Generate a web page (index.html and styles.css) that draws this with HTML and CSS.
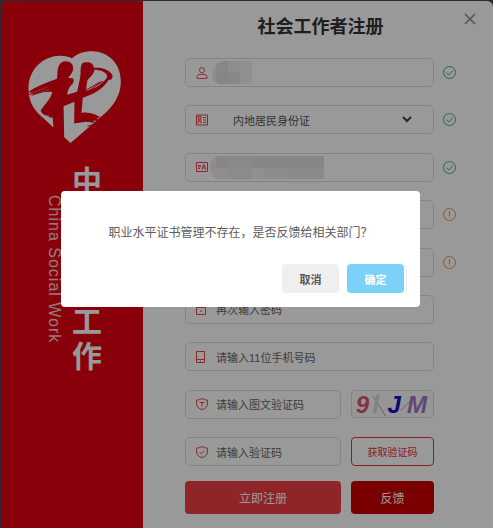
FILE: index.html
```
<!DOCTYPE html>
<html lang="zh-CN">
<head>
    <meta charset="UTF-8">
    <meta name="viewport" content="width=device-width, initial-scale=1.0">
    <title>社会工作者注册</title>
    <link rel="stylesheet" href="styles.css">
</head>
<body>

<div class="panel">
    <div class="side">
        <svg class="logo" viewBox="80 148 286 284">
            <path class="heart" d="M211 429 L120 346 C96 324 84 298 84 265 C84 206 128 165 180 165 C196 165 206 168 215 173 C231 160 252 152 275 152 C326 152 363 190 363 243 C363 282 344 311 318 337 Z"/>
            <path d="M196 182 C211 182 219 191 219 202 C219 216 210 225 204 232 L219 234 C223 243 219 250 212 255 C205 263 202 272 201 283 L231 274 L240 232 C243 219 239 209 244 194 C246 186 251 185 261 185 C272 184 280 191 282 202 C303 199 329 207 338 224 C339 234 332 240 326 238 C315 259 287 281 248 292 L244 338 C260 335 277 340 287 344 L301 351 L290 355 L299 361 L280 362 L284 368 L258 365 L222 370 L223 304 L190 318 L192 419 L160 390 L157 352 L144 351 L147 346 C135 349 122 339 121 330 C134 311 151 297 156 275 L143 274 C125 276 111 279 91 288 L100 280 L83 285 L94 276 L80 277 C105 260 137 246 170 235 C173 222 169 205 178 192 C183 184 188 182 196 182 Z"/>
            <path class="heart" d="M284 207 C280 225 268 231 262 240 L257 271 C285 266 310 249 321 231 C326 220 307 209 284 207 Z"/>
            <path class="brush" d="M91 279 L141 260 M98 288 L145 266"/>
            <path class="stroke" d="M256 270 L302 244 M262 274 L309 242"/>
            <path class="stroke" d="M262 378 L280 374"/>
        </svg>
        <div class="names">
            <div class="name-en">China Social Work</div>
            <div class="name-cn">中国社会工作</div>
        </div>
    </div>

    <form class="main">
        <button type="button" class="close" aria-label="关闭">
            <svg viewBox="0 0 12 12"><path d="M1 1 L11 11 M11 1 L1 11"/></svg>
        </button>
        <h1>社会工作者注册</h1>

        <div class="rows">
            <div class="row">
                <div class="field">
                    <svg class="icon" viewBox="0 0 12 13"><circle cx="6" cy="3.5" r="2.8"/><path d="M.6 12.4 V11 C.6 9 2 8 4 8 H8 C10 8 11.4 9 11.4 11 V12.4 Z"/></svg>
                    <input type="text" aria-label="姓名">
                    <svg class="mosaic name" viewBox="0 0 40 23">
                        <path fill="#f7e9e9" d="M5 5 Q0 7 0 14 Q1 21 5 22 Z"/>
                        <path fill="#e2e2e2" d="M4 4 Q7 0 12 0 H16 V11 H4 Z"/>
                        <path fill="#ececec" d="M16 0 H28 V11 H16 Z"/>
                        <path fill="#f1f1f1" d="M28 0 H40 V23 H28 Z"/>
                        <path fill="#dedede" d="M4 11 H16 V23 H8 Q4 23 4 19 Z"/>
                        <path fill="#e3e3e3" d="M16 11 H28 V23 H16 Z"/>
                    </svg>
                </div>
                <svg class="status ok" viewBox="0 0 13 13"><circle cx="6.5" cy="6.5" r="6"/><path d="M3.3 6.7 L5.8 9 L10 4.4"/></svg>
            </div>

            <div class="row">
                <div class="field">
                    <svg class="icon" viewBox="0 0 12 12"><path d="M.5 1 H11.5 V11 H.5 Z M2 2.5 H5 V5 H2 Z M2 9.5 V7 H5 V9.5 M2 6 H5 M7 3.5 H10 M7 6 H10 M7 8.5 H10"/></svg>
                    <select aria-label="证件类型"><option>内地居民身份证</option></select>
                    <svg class="arrow" viewBox="0 0 10 7"><path d="M1 1 L5 5 L9 1"/></svg>
                </div>
                <svg class="status ok" viewBox="0 0 13 13"><circle cx="6.5" cy="6.5" r="6"/><path d="M3.3 6.7 L5.8 9 L10 4.4"/></svg>
            </div>

            <div class="row">
                <div class="field">
                    <svg class="icon" viewBox="0 0 12 12"><path d="M.5 1.5 H11.5 V10.5 H.5 Z M2 4.5 H5 M2 6 H4.6 M2 7.5 H4 M5.8 8.5 L7.8 3.5 L9.8 8.5 M6.5 7 H9"/></svg>
                    <input type="text" aria-label="证件号码">
                    <svg class="mosaic number" viewBox="0 0 114 23">
                        <path fill="#f7e6e6" d="M7 0 Q0 3 0 11 Q0 20 7 23 Z"/>
                        <path fill="#e0e0e0" d="M6 0 H18 V12 H6 Z"/>
                        <path fill="#e4e4e4" d="M18 0 H42 V12 H18 Z"/>
                        <path fill="#e0e0e0" d="M42 0 H114 V12 H42 Z"/>
                        <path fill="#ececec" d="M6 12 H18 V23 H6 Z"/>
                        <path fill="#e8e8e8" d="M18 12 H42 V23 H18 Z"/>
                        <path fill="#f0f0f0" d="M42 12 H54 V23 H42 Z"/>
                        <path fill="#eaeaea" d="M54 12 H78 V23 H54 Z"/>
                        <path fill="#e6e6e6" d="M78 12 H114 V23 H78 Z"/>
                    </svg>
                </div>
                <svg class="status ok" viewBox="0 0 13 13"><circle cx="6.5" cy="6.5" r="6"/><path d="M3.3 6.7 L5.8 9 L10 4.4"/></svg>
            </div>

            <div class="row">
                <div class="field"><input type="text" aria-label="证书编号"></div>
                <svg class="status warn" viewBox="0 0 13 13"><circle cx="6.5" cy="6.5" r="6"/><path d="M6.5 3 V8 M6.5 9 V10"/></svg>
            </div>

            <div class="row">
                <div class="field"><input type="password" aria-label="密码"></div>
                <svg class="status warn" viewBox="0 0 13 13"><circle cx="6.5" cy="6.5" r="6"/><path d="M6.5 3 V8 M6.5 9 V10"/></svg>
            </div>

            <div class="row">
                <div class="field">
                    <svg class="icon" viewBox="0 0 12 12"><path d="M.5 4.5 H9.5 V11.5 H.5 Z M2.5 4.5 V1 H7.5 V4.5 M5 7 V9"/></svg>
                    <input type="password" placeholder="再次输入密码" aria-label="再次输入密码">
                </div>
            </div>

            <div class="row">
                <div class="field">
                    <svg class="icon" viewBox="0 0 12 12"><path d="M.5 .5 H8.5 V11.5 H.5 Z M.5 8.5 H8.5 M4 10 H5"/></svg>
                    <input type="tel" placeholder="请输入11位手机号码" aria-label="手机号码">
                </div>
            </div>

            <div class="row">
                <div class="field">
                    <svg class="icon" viewBox="0 0 12 12"><path d="M6 .5 C7.5 1.6 9.5 2 11.4 2 V6 C11.4 9 9 10.6 6 11.6 C3 10.6 .6 9 .6 6 V2 C2.5 2 4.5 1.6 6 .5 Z M3.5 4.5 H8.5 M6 4.5 V8.5"/></svg>
                    <input type="text" placeholder="请输入图文验证码" aria-label="图文验证码">
                </div>
                <svg class="captcha" viewBox="0 0 83 28" role="img" aria-label="验证码图片">
                    <path class="noise" d="M21 6 L34 27 M50 21 L66 6"/>
                    <text x="2" y="24" fill="#e0566c">9</text>
                    <text x="20" y="24" fill="#dcd8c8">l</text>
                    <text x="36" y="24" fill="#1010c8">J</text>
                    <text x="57" y="24" fill="#a276c8">M</text>
                </svg>
            </div>

            <div class="row">
                <div class="field">
                    <svg class="icon" viewBox="0 0 12 12"><path d="M6 .5 C7.5 1.6 9.5 2 11.4 2 V6 C11.4 9 9 10.6 6 11.6 C3 10.6 .6 9 .6 6 V2 C2.5 2 4.5 1.6 6 .5 Z M3.6 6 L5.4 7.8 L8.6 4.6"/></svg>
                    <input type="text" placeholder="请输入验证码" aria-label="验证码">
                </div>
                <button type="button" class="get-code">获取验证码</button>
            </div>
        </div>

        <div class="actions">
            <button type="submit" class="register">立即注册</button>
            <button type="button" class="feedback">反馈</button>
        </div>
    </form>
</div>

<div class="mask">
    <div class="dialog" role="dialog" aria-modal="true">
        <p>职业水平证书管理不存在，是否反馈给相关部门？</p>
        <div class="dialog-buttons">
            <button type="button" class="cancel">取消</button>
            <button type="button" class="confirm">确定</button>
        </div>
    </div>
</div>

</body>
</html>
```
FILE: styles.css
```
* { box-sizing: border-box; }
body { margin: 0; background: #454b54; font-family: "Liberation Sans", "Noto Sans CJK SC", sans-serif; font-size: 11px; color: #333; }
button, input, select { font-family: inherit; font-size: inherit; color: inherit; margin: 0; }
button { padding: 0; border: 0; border-radius: 4px; cursor: pointer; }
svg { display: block; flex: none; fill: none; }

.panel { display: flex; min-height: 100vh; padding: 1px 0 0 1px; }

/* left banner */
.side { flex: none; width: 142px; padding-top: 49px; background: #e60011; border-radius: 6px 0 0 0; }
.logo { width: 95px; height: 94px; margin-left: 26px; fill: #e60011; }
.logo .heart { fill: #fff; }
.logo .brush { stroke: #fff; stroke-width: 1; }
.logo .stroke { stroke: #e60011; stroke-width: 3; }
.names { display: flex; gap: 9px; margin: 20px 0 0 44px; color: #fff; }
.name-en { writing-mode: vertical-rl; width: 18px; margin-top: 31px; font-size: 16px; line-height: 18px; letter-spacing: 1px; white-space: nowrap; opacity: .8; }
.name-cn { width: 30px; font-size: 30px; line-height: 35px; font-weight: bold; word-break: break-all; }

/* form */
.main { position: relative; flex: 1; min-width: 0; display: flex; flex-direction: column; padding: 13px 37px 14px 42px; background: #fff; border-radius: 0 6px 0 0; }
.main h1 { margin: 0 0 17px; padding-right: 0; text-align: center; font-size: 18px; line-height: 27px; }
.close { position: absolute; top: 12px; right: 17px; width: 12px; height: 12px; background: none; }
.close svg { stroke: #888; stroke-width: 1.5; }
.rows { flex: 1; display: flex; flex-direction: column; justify-content: space-between; }
.row { display: flex; align-items: center; gap: 9px; padding-right: 22px; }
.row:has(.status) { padding-right: 0; }
.row:has(.captcha), .row:has(.get-code) { gap: 10px; }
.field { position: relative; flex: 1; min-width: 0; display: flex; align-items: center; height: 29px; padding-left: 10px; border: 1px solid #dcdcdc; border-radius: 5px; }
.field input { flex: 1; min-width: 0; height: 27px; padding: 2px 0 0 8px; border: 0; background: none; outline: 0; }
.field input::placeholder { color: #666; opacity: 1; }
.field select { flex: 1; min-width: 0; height: 27px; padding: 2px 0 0 25px; border: 0; background: none; color: #555; appearance: none; outline: 0; }
.icon { width: 12px; height: 12px; stroke: #e8444c; }
.arrow { width: 10px; height: 7px; margin-right: 21px; stroke: #444; stroke-width: 2; }
.mosaic { position: absolute; top: 2px; height: 23px; }
.mosaic.name { left: 26px; width: 40px; }
.mosaic.number { left: 24px; width: 114px; }
.status { width: 13px; height: 13px; }
.ok { stroke: #3fae70; }
.warn { stroke: #e89a3c; }
.captcha { width: 83px; height: 28px; border: 1px solid #dcdcdc; border-radius: 4px; background: #fbfbfb; font-size: 26px; font-weight: bold; font-style: italic; }
.captcha .noise { stroke: #a0a8a0; }
.get-code { width: 83px; height: 29px; border: 1px solid #e8343c; background: #fff; color: #e8343c; font-size: 10px; }

.actions { display: flex; gap: 10px; margin-top: 15px; padding-right: 22px; }
.actions button { height: 33px; color: #fff; font-size: 12px; }
.register { flex: 1; background: #ee3e43; }
.actions .feedback { width: 83px; background: #cb0000; }

/* confirm dialog */
.mask { position: fixed; inset: 0; padding: 191px 73px 0 61px; background: rgba(0,0,0,0.4); }
.dialog { padding: 32px 16px 14px; background: #fff; border-radius: 4px; }
.dialog p { margin: 0 0 20px; text-align: center; font-size: 12px; line-height: 21px; color: #5c5c5c; }
.dialog-buttons { display: flex; justify-content: flex-end; gap: 8px; }
.dialog-buttons button { width: 57px; height: 29px; font-size: 11px; font-weight: bold; }
.cancel { background: #efefef; color: #555; }
.confirm { background: #7cd1f9; color: #fff; box-shadow: 2px 0 0 #fff, 3px 0 0 #e6edf2; }
```
